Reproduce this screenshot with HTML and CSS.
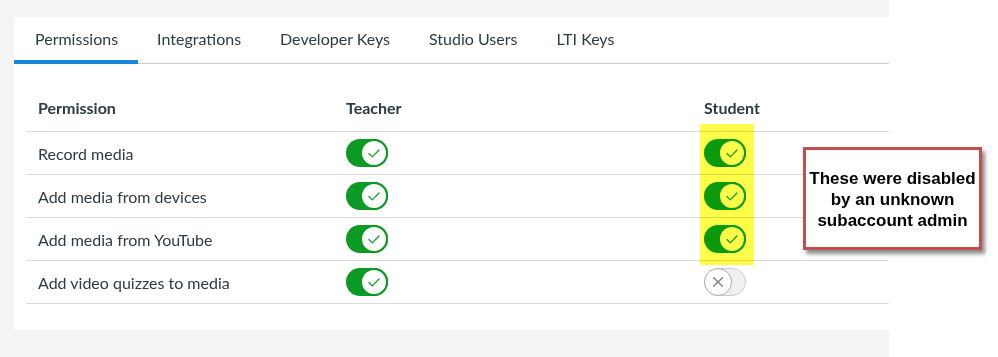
FILE: index.html
```html
<!DOCTYPE html>
<html lang="en">
<head>
    <meta charset="UTF-8">
    <meta name="viewport" content="width=device-width, initial-scale=1.0">
    <title>Studio Permissions</title>
    <link rel="stylesheet" href="styles.css">
</head>
<body>
    <div class="screen">
        <div class="card">
            <ul class="tabs">
                <li class="tab active">Permissions</li>
                <li class="tab">Integrations</li>
                <li class="tab">Developer Keys</li>
                <li class="tab">Studio Users</li>
                <li class="tab">LTI Keys</li>
            </ul>

            <table class="perm-table">
                <thead>
                    <tr>
                        <th class="col-name">Permission</th>
                        <th class="col-teacher">Teacher</th>
                        <th class="col-student">Student</th>
                    </tr>
                </thead>
                <tbody>
                    <tr>
                        <td>Record media</td>
                        <td><span class="toggle on"><span class="knob"><svg viewBox="0 0 24 24"><path d="M7 12.5l3.3 3.3L17 9"/></svg></span></span></td>
                        <td><span class="toggle on"><span class="knob"><svg viewBox="0 0 24 24"><path d="M7 12.5l3.3 3.3L17 9"/></svg></span></span></td>
                    </tr>
                    <tr>
                        <td>Add media from devices</td>
                        <td><span class="toggle on"><span class="knob"><svg viewBox="0 0 24 24"><path d="M7 12.5l3.3 3.3L17 9"/></svg></span></span></td>
                        <td><span class="toggle on"><span class="knob"><svg viewBox="0 0 24 24"><path d="M7 12.5l3.3 3.3L17 9"/></svg></span></span></td>
                    </tr>
                    <tr>
                        <td>Add media from YouTube</td>
                        <td><span class="toggle on"><span class="knob"><svg viewBox="0 0 24 24"><path d="M7 12.5l3.3 3.3L17 9"/></svg></span></span></td>
                        <td><span class="toggle on"><span class="knob"><svg viewBox="0 0 24 24"><path d="M7 12.5l3.3 3.3L17 9"/></svg></span></span></td>
                    </tr>
                    <tr>
                        <td>Add video quizzes to media</td>
                        <td><span class="toggle on"><span class="knob"><svg viewBox="0 0 24 24"><path d="M7 12.5l3.3 3.3L17 9"/></svg></span></span></td>
                        <td><span class="toggle off"><span class="knob"><svg viewBox="0 0 24 24"><path d="M8 8l8 8M16 8l-8 8"/></svg></span></span></td>
                    </tr>
                </tbody>
            </table>
        </div>
    </div>

    <!-- annotations pasted on top of the screenshot -->
    <div class="highlight"></div>
    <div class="callout">These were disabled<br>by an unknown<br>subaccount admin</div>
</body>
</html>
```

FILE: styles.css
```css
body {
    margin: 0;
    background: #fff;
    font-family: 'Lato', 'Liberation Sans', sans-serif;
    color: #2d3b45;
    position: relative;
    width: 998px;
    height: 357px;
    overflow: hidden;
}
.screen {
    width: 875px;
    background: #f4f4f4;
    padding: 17px 0 28px 14px;
}
.card {
    background: #fff;
    padding-bottom: 26px;
}
.tabs {
    list-style: none;
    margin: 0;
    padding: 0;
    display: flex;
    border-bottom: 1px solid #c7cdd1;
    height: 46px;
}
.tab {
    padding: 0 20px 0 19px;
    font-size: 16px;
    line-height: 44px;
    color: #2d3b45;
}
.tab.active {
    border-bottom: 4px solid #1a88d9;
    margin-bottom: -1px;
    padding-left: 21px;
    height: 43px;
}
.perm-table {
    border-collapse: collapse;
    margin: 22px 0 0 12px;
    width: 863px;
    font-size: 16px;
}
.perm-table th {
    text-align: left;
    font-weight: 700;
    height: 42px;
    padding: 0 12px 3px;
    border-bottom: 1px solid #d8dcdf;
}
.perm-table td {
    height: 42px;
    padding: 0 12px;
    border-bottom: 1px solid #d8dcdf;
}
.col-name { width: 284px; }
.col-teacher { width: 334px; }
.toggle {
    display: block;
    position: relative;
    width: 42px;
    height: 28px;
    border-radius: 14px;
    box-sizing: border-box;
}
.toggle.on {
    background: #0b9a23;
}
.toggle.off {
    background: #f0f0f0;
    border: 1px solid #c7cdd1;
}
.knob {
    position: absolute;
    top: 0;
    width: 28px;
    height: 28px;
    border-radius: 50%;
    background: #fff;
    box-sizing: border-box;
}
.toggle.on .knob {
    right: 0;
    border: 2px solid #0b9a23;
}
.toggle.off .knob {
    left: -1px;
    top: -1px;
    border: 1px solid #a5afb5;
}
.knob svg {
    width: 100%;
    height: 100%;
    fill: none;
    stroke-width: 1.2;
    stroke-linecap: round;
    stroke-linejoin: round;
}
.toggle.on .knob svg { stroke: #0b9a23; }
.toggle.off .knob svg { stroke: #73818c; }
.highlight {
    position: absolute;
    left: 700px;
    top: 124px;
    width: 54px;
    height: 141px;
    background: #ffff4a;
    mix-blend-mode: multiply;
}
.callout {
    position: absolute;
    left: 803px;
    top: 147px;
    width: 179px;
    height: 103px;
    box-sizing: border-box;
    border: 3px solid #c0504d;
    background: #fff;
    box-shadow: 3px 4px 4px rgba(0, 0, 0, 0.45);
    font-family: 'Liberation Sans', Arial, sans-serif;
    font-weight: 700;
    font-size: 17px;
    line-height: 21px;
    color: #000;
    text-align: center;
    padding-top: 18px;
}
```
